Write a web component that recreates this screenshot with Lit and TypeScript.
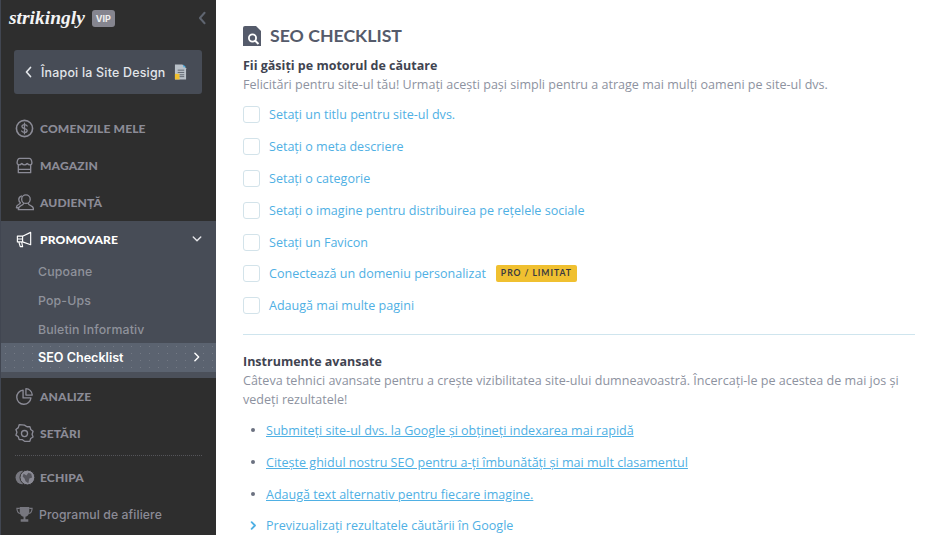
import { LitElement, html, css, svg } from "lit";
import { customElement } from "lit/decorators.js";

const ic = (body: unknown) => html`<svg class="nav-ic" viewBox="0 0 20 20" fill="none" stroke="currentColor" stroke-width="1.4" stroke-linecap="round" stroke-linejoin="round">${body}</svg>`;

const icons: Record<string, unknown> = {
  dollar: ic(svg`<circle cx="10" cy="10" r="8.500" stroke-width="1.700"/><path d="M12.800 7.400c-.5-1-1.600-1.500-2.800-1.500-1.500 0-2.700.8-2.700 2 0 2.900 5.500 1.400 5.500 4.200 0 1.200-1.300 2-2.800 2-1.300 0-2.400-.5-3-1.500M10 4.500v11"/>`),
  store: ic(svg`<path d="M5 2.500h10c1.500 0 2.500 1.200 2.800 4.500 0 1.500-1 2.300-2.300 2.300-1.100 0-1.900-.6-2.700-1.400-.6.8-1.600 1.400-2.800 1.400s-2.200-.6-2.800-1.400c-.8.800-1.600 1.400-2.700 1.400C3.200 9.300 2.200 8.500 2.200 7 2.500 3.700 3.500 2.500 5 2.500zM3.500 9.500v8h13v-8M3.500 14h13"/>`),
  people: ic(svg`<circle cx="11.500" cy="6.500" r="4.500"/><path d="M9 11c0 1-.5 1.500-3 2.500-1.500.6-2.500 1.500-2.500 4h16c0-2.500-1-3.400-2.500-4-2.500-1-3-1.500-3-2.500M6.800 3.200C4.800 3.700 4 5.200 4 6.800c0 1.500.7 2.800 1.700 3.500 0 .8-.7 1.200-2 1.800C2.300 12.700 1.500 13.700 1.500 15.500h2"/>`),
  horn: ic(svg`<path stroke-width="1.200" d="M16.500 2.500v13L8 12.500H2.500V6.500L8 6.500zM8 6.500v6M2.500 9.500H8M4 12.500l1.500 5h2.500l-1-5"/>`),
  pie: ic(svg`<path d="M8.500 3.200a7.500 7.500 0 1 0 8.300 8.300H8.500z"/><path d="M11.500 1.800a7 7 0 0 1 6.700 6.700h-6.700z"/>`),
  gear: ic(svg`<path d="M10 1.500l2.600 1.700 3.100-.1.900 3 2.400 1.900-1 3 1 3-2.500 1.600-.9 3-3.100-.1L10 18.500l-2.500-1.800-3.100.1-.9-3L1 12l1-3-1-3 2.500-1.900.9-3 3.100.1z" transform="translate(0 -.3)"/><circle cx="10" cy="10" r="3.200"/>`),
  globe: html`<svg class="nav-ic team" viewBox="0 0 22 20"><circle cx="7.500" cy="10" r="7" fill="#77777f"/><circle cx="13" cy="10" r="7.800" fill="#8a8a94" stroke="#2e2e2e"/><path d="M9 6l3 2 2-3 3 1 1 4-3 1-1 5-3-2-1-3-2-2z" fill="#55555c"/></svg>`,
  trophy: html`<svg class="nav-ic" viewBox="0 0 20 20"><path d="M5 2h10v5c0 3-2 5-4 5.300V15h3v2.500H6V15h3v-2.700C7 12 5 10 5 7z" fill="#77777f"/><path d="M5 3.500H2c0 3 1 5 3.500 5.500M15 3.500h3c0 3-1 5-3.500 5.500" fill="none" stroke="#77777f" stroke-width="1.200"/></svg>`,
};

const chevron = (dir: string, cls = "") => {
  const d = dir === "left" ? "M6.500 1.500L2.500 6l4 4.500" : dir === "down" ? "M1.500 3.500L6 8l4.500-4.500" : "M3.500 1.500L8 6l-4.500 4.500";
  return html`<svg class="chev ${cls}" viewBox="0 0 12 12" fill="none" stroke="currentColor" stroke-width="1.700" stroke-linecap="round" stroke-linejoin="round"><path d=${d}/></svg>`;
};

@customElement("app-root")
export class AppRoot extends LitElement {
  static styles = css`
    :host { display: flex; width: 928px; height: 535px; overflow: hidden; background: #fff; font-family: "Open Sans", sans-serif; }
    aside { width: 216px; flex: none; height: 535px; box-sizing: border-box; background: #2e2e2e; border-left: 1px solid #414651; display: flex; flex-direction: column; overflow: hidden; }
    .top { height: 36px; flex: none; display: flex; align-items: center; padding: 0 5px 0 8px; box-sizing: border-box; }
    .logo { font: italic 700 19.500px/1 "Liberation Serif", serif; color: #f4f4f4; }
    .vip { margin-left: 7px; width: 23px; height: 17px; border-radius: 3px; background: #85858f; color: #eee; font: 700 9px/17px "Inter", sans-serif; text-align: center; }
    .collapse.chev { margin-left: auto; width: 14px; height: 14px; color: #5f6570; }
    .back { margin: 14px 14px 0 13px; height: 44px; flex: none; background: #474c56; border-radius: 3px; display: flex; align-items: center; padding-left: 10px; color: #e3e6ea; font: 500 12.400px "Inter", sans-serif; letter-spacing: .22px; }
    .back .chev { width: 12px; height: 12px; margin-right: 5px; }
    .back .doc { width: 13px; height: 16px; margin-left: 9px; }
    nav { display: flex; flex-direction: column; margin-top: 16px; }
    .item { height: 37px; flex: none; display: flex; align-items: center; padding-left: 14px; color: #8b8b96; font: 900 12.100px "Lato", sans-serif; letter-spacing: .1px; }
    .nav-ic { width: 19px; height: 19px; margin-right: 6px; flex: none; }
    .nav-ic.team { width: 21px; margin-right: 4px; }
    .promo { background: #474c56; height: 121.500px; flex: none; }
    .promo .item { color: #fff; height: 36px; }
    .promo .item .chev { width: 10px; height: 10px; margin-left: auto; margin-right: 14px; color: #e4e4e8; }
    .sub { height: 29px; display: flex; align-items: center; padding-left: 37px; color: #8f929b; font: 500 12.300px "Inter", sans-serif; letter-spacing: .17px; }
    .active { height: 29px; flex: none; display: flex; align-items: center; padding-left: 37px; background: #5b6370 radial-gradient(#747a85 0.5px, transparent 0.6px) 0 0 / 9px 7px; color: #fff; font: 600 12.600px "Inter", sans-serif; }
    .active .chev { width: 10px; height: 10px; margin-left: auto; margin-right: 14px; }
    .strip { height: 6px; flex: none; background: #4b505a; }
    .sep { margin: 3px 14px 3px; border-top: 1px dotted #55555a; }
    .item.plain { font: 500 12.200px "Inter", sans-serif; letter-spacing: .1px; color: #8b8b96; }
    .item.plain .nav-ic { margin-right: 5px; }
    main { flex: 1; min-width: 0; padding: 24px 13px 0 27px; color: #8d92a0; font-size: 12.550px; line-height: 19px; }
    h1 { display: flex; align-items: center; margin: 0; height: 24px; font: 700 17.700px/24px "Lato", sans-serif; color: #555b6b; }
    h1 svg { width: 18px; height: 20px; margin-right: 9px; flex: none; }
    h2 { margin: 0; font-size: 12.500px; line-height: 19px; font-weight: 700; color: #3f4451; }
    .head { margin-top: 8px; }
    .desc { margin: 0; }
    .checks { list-style: none; margin: 5px 0 0; padding: 0; display: flex; flex-direction: column; }
    .checks li { height: 31.800px; display: flex; align-items: center; color: #4fb0e4; }
    .box { width: 17px; height: 17px; box-sizing: border-box; border: 1px solid #d3e3ea; border-radius: 3px; margin-right: 9px; flex: none; }
    .badge { margin-left: 10px; height: 17px; padding: 0 5px; background: #f0c030; border-radius: 2px; color: #3a3a40; font: 700 8.600px/17px "Lato", sans-serif; letter-spacing: .95px; }
    hr { margin: 12px 0 0; border: 0; border-top: 1px solid #cfe5ee; }
    .adv { margin-top: 17.500px; }
    .links { list-style: none; margin: 5.500px 0 0; padding: 0 0 0 6px; display: flex; flex-direction: column; }
    .links li { height: 31.800px; display: flex; align-items: center; color: #4fb0e4; }
    .links a { color: inherit; text-decoration: underline; }
    .dot { width: 4px; height: 4px; border-radius: 50%; background: #6b7180; margin: 0 11px 0 2px; flex: none; }
    .links .chev { width: 9px; height: 9px; margin: 0 8px 0 0; flex: none; color: #4fb0e4; stroke-width: 2.400; }
  `;

  render() {
    return html`
      <aside>
        <div class="top">
          <span class="logo">strikingly</span><span class="vip">VIP</span>
          ${chevron("left", "collapse")}
        </div>
        <div class="back">
          ${chevron("left")}<span>Înapoi la Site Design</span>
          <svg class="doc" viewBox="0 0 14 16"><path d="M1 0h8l4 4v12H1z" fill="#b9c0c8"/><path d="M1 10h5v6H1z" fill="#f0c030"/><path d="M10 0l3 3h-3z" fill="#4bafe3"/><path d="M4 6h7M4 8.500h7M6 11h5M6 13h5" stroke="#5b616c"/></svg>
        </div>
        <nav>
          <div class="item">${icons.dollar}COMENZILE MELE</div>
          <div class="item">${icons.store}MAGAZIN</div>
          <div class="item">${icons.people}AUDIENȚĂ</div>
          <div class="promo">
            <div class="item">${icons.horn}PROMOVARE${chevron("down")}</div>
            <div class="sub">Cupoane</div>
            <div class="sub">Pop-Ups</div>
            <div class="sub">Buletin Informativ</div>
          </div>
          <div class="active">SEO Checklist${chevron("right")}</div>
          <div class="strip"></div>
          <div class="item">${icons.pie}ANALIZE</div>
          <div class="item">${icons.gear}SETĂRI</div>
          <div class="sep"></div>
          <div class="item">${icons.globe}ECHIPA</div>
          <div class="item plain">${icons.trophy}Programul de afiliere</div>
        </nav>
      </aside>
      <main>
        <h1>
          <svg viewBox="0 0 18 20"><path d="M0 2a2 2 0 0 1 2-2h11l5 5v15H0z" fill="#555b6b"/><circle cx="9.500" cy="12" r="3.600" fill="none" stroke="#fff" stroke-width="1.800"/><path d="M12 14.500l3.500 3.500" stroke="#fff" stroke-width="2"/></svg>
          SEO CHECKLIST
        </h1>
        <h2 class="head">Fii găsiți pe motorul de căutare</h2>
        <p class="desc">Felicitări pentru site-ul tău! Urmați acești pași simpli pentru a atrage mai mulți oameni pe site-ul dvs.</p>
        <ul class="checks">
          <li><span class="box"></span>Setați un titlu pentru site-ul dvs.</li>
          <li><span class="box"></span>Setați o meta descriere</li>
          <li><span class="box"></span>Setați o categorie</li>
          <li><span class="box"></span>Setați o imagine pentru distribuirea pe rețelele sociale</li>
          <li><span class="box"></span>Setați un Favicon</li>
          <li><span class="box"></span>Conectează un domeniu personalizat<span class="badge">PRO / LIMITAT</span></li>
          <li><span class="box"></span>Adaugă mai multe pagini</li>
        </ul>
        <hr />
        <h2 class="adv">Instrumente avansate</h2>
        <p class="desc">Câteva tehnici avansate pentru a crește vizibilitatea site-ului dumneavoastră. Încercați-le pe acestea de mai jos și vedeți rezultatele!</p>
        <ul class="links">
          <li><span class="dot"></span><a>Submiteți site-ul dvs. la Google și obțineți indexarea mai rapidă</a></li>
          <li><span class="dot"></span><a>Citește ghidul nostru SEO pentru a-ți îmbunătăți și mai mult clasamentul</a></li>
          <li><span class="dot"></span><a>Adaugă text alternativ pentru fiecare imagine.</a></li>
          <li>${chevron("right")}Previzualizați rezultatele căutării în Google</li>
        </ul>
      </main>
    `;
  }
}
